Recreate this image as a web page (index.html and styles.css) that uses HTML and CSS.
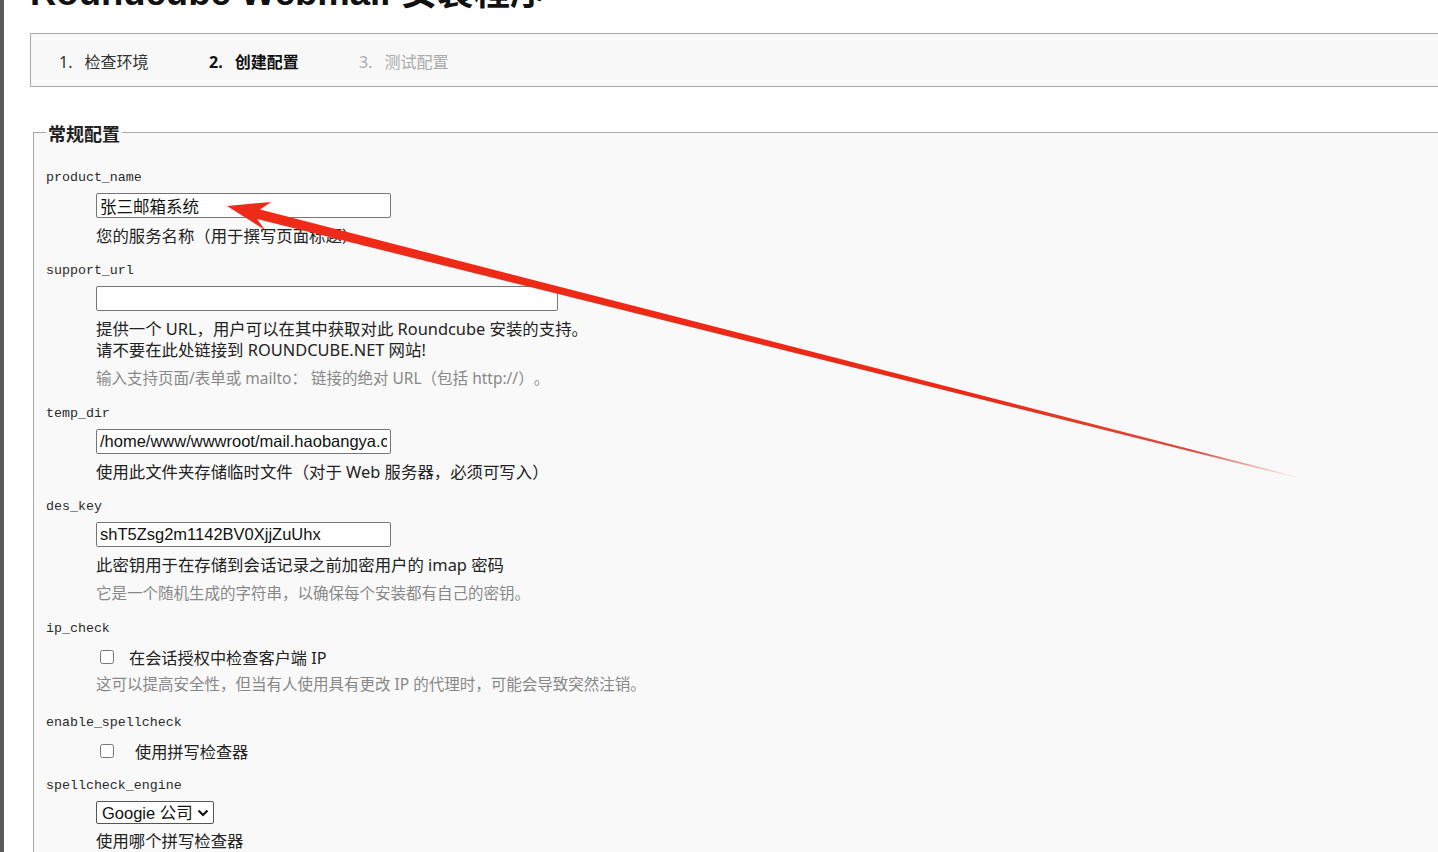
FILE: index.html
```html
<!DOCTYPE html>
<html lang="zh-CN">
<head>
<meta charset="utf-8">
<title>Roundcube Webmail 安装程序</title>
<link rel="stylesheet" href="styles.css">
</head>
<body>
<div class="frame">
  <div class="page">
    <h1 class="title">Roundcube Webmail 安装程序</h1>
    <ol class="progress">
      <li class="step done"><span class="num">1.</span>检查环境</li>
      <li class="step current"><span class="num">2.</span>创建配置</li>
      <li class="step todo"><span class="num">3.</span>测试配置</li>
    </ol>
    <form class="config">
      <fieldset class="group">
        <legend class="group-title">常规配置</legend>
        <dl class="fields">
          <dt class="key">product_name</dt>
          <dd class="val">
            <input class="text" type="text" value="张三邮箱系统">
            <div class="desc">您的服务名称（用于撰写页面标题）</div>
          </dd>

          <dt class="key">support_url</dt>
          <dd class="val">
            <input class="text wide" type="text" value="">
            <div class="desc">提供一个 URL，用户可以在其中获取对此 Roundcube 安装的支持。<br>请不要在此处链接到 ROUNDCUBE.NET 网站!</div>
            <p class="hint">输入支持页面/表单或 mailto： 链接的绝对 URL（包括 http://）。</p>
          </dd>

          <dt class="key">temp_dir</dt>
          <dd class="val">
            <input class="text" type="text" value="/home/www/wwwroot/mail.haobangya.com/temp/">
            <div class="desc">使用此文件夹存储临时文件（对于 Web 服务器，必须可写入）</div>
          </dd>

          <dt class="key">des_key</dt>
          <dd class="val">
            <input class="text" type="text" value="shT5Zsg2m1142BV0XjjZuUhx">
            <div class="desc">此密钥用于在存储到会话记录之前加密用户的 imap 密码</div>
            <p class="hint">它是一个随机生成的字符串，以确保每个安装都有自己的密钥。</p>
          </dd>

          <dt class="key">ip_check</dt>
          <dd class="val">
            <div class="check-row">
              <input class="check" type="checkbox" id="ip_check">
              <label class="check-label" for="ip_check">在会话授权中检查客户端 IP</label>
            </div>
            <p class="hint hint-check">这可以提高安全性，但当有人使用具有更改 IP 的代理时，可能会导致突然注销。</p>
          </dd>

          <dt class="key">enable_spellcheck</dt>
          <dd class="val val-check">
            <div class="check-row">
              <input class="check" type="checkbox" id="spell">
              <label class="check-label indent" for="spell">使用拼写检查器</label>
            </div>
          </dd>

          <dt class="key">spellcheck_engine</dt>
          <dd class="val">
            <div class="select-wrap">
              <select class="select"><option>Googie 公司</option></select>
              <svg class="chev" width="12" height="8" viewBox="0 0 12 8"><path d="M1.5 1.5 L6 6 L10.5 1.5" fill="none" stroke="#111" stroke-width="2.2"/></svg>
            </div>
            <div class="desc desc-tight">使用哪个拼写检查器</div>
          </dd>
        </dl>
      </fieldset>
    </form>
  </div>
</div>
<svg class="arrow" width="1438" height="852" viewBox="0 0 1438 852">
  <defs>
    <linearGradient id="fade" gradientUnits="userSpaceOnUse" x1="227" y1="206" x2="1300" y2="478">
      <stop offset="0" stop-color="#f02a18" stop-opacity="1"/>
      <stop offset="0.7" stop-color="#ea2a16" stop-opacity="1"/>
      <stop offset="0.9" stop-color="#d43020" stop-opacity="0.85"/>
      <stop offset="1" stop-color="#d43020" stop-opacity="0"/>
    </linearGradient>
  </defs>
  <polygon fill="url(#fade)" points="227,206 271,202 260,209.5 1300,477.4 1300,478.6 257,219 265,230 227,206"/>
</svg>
</body>
</html>
```
FILE: styles.css
```css
html, body {
  margin: 0;
  padding: 0;
  background: #fff;
  overflow: hidden;
  height: 852px;
}

body {
  font-family: "Noto Sans", "Noto Sans CJK SC", sans-serif;
  color: #222;
  position: relative;
  text-spacing-trim: space-all;
}

.frame {
  border-left: 4px solid #5a5a5a;
  height: 852px;
  display: flow-root;
}

.page {
  width: 1520px;
  padding-left: 26px;
}

.title {
  margin: -28px 0 0 0;
  font-family: "Liberation Sans", "Noto Sans CJK SC", sans-serif;
  font-size: 36.5px;
  line-height: 42px;
  font-weight: bold;
  color: #111;
  white-space: nowrap;
}

.progress {
  list-style: none;
  margin: 19px 0 31px 0;
  padding: 17px 0 13px 28px;
  border: 1px solid #aaa;
  background: #f8f8f8;
  box-shadow: inset 0 4px 0 #f8f8f8, inset 0 5px 0 #fdfdfd, inset 0 -4px 0 #f8f8f8, inset 0 -5px 0 #fdfdfd;
  display: flex;
}

.step {
  width: 150px;
  font-size: 16px;
  line-height: 22px;
  color: #333;
}

.step .num {
  margin-right: 12px;
}

.step.current {
  color: #111;
  font-weight: bold;
}

.step.todo {
  color: #aaa;
}

.config {
  margin: 0 0 0 3px;
}

.group {
  margin: 0;
  border: 1px solid #a8a8a8;
  background: #f9f9f9;
  padding: 10px 12px;
  min-height: 900px;
}

.group-title {
  padding: 4px 2px 0 2px;
  font-size: 18px;
  line-height: 24px;
  font-weight: bold;
  color: #222;
}

.fields {
  margin: 10px 0 0 0;
}

.key {
  font-family: "Liberation Mono", monospace;
  font-size: 13.3px;
  line-height: 20px;
  padding-top: 2px;
  color: #2a2a2a;
}

.val {
  margin: 5px 0 12px 50px;
}

.val-check {
  margin-bottom: 10px;
}

.text {
  display: block;
  box-sizing: border-box;
  width: 295px;
  height: 25px;
  margin: 0;
  padding: 1px 3px;
  border: 1px solid #767676;
  border-radius: 2px;
  background: #fff;
  font-family: "Liberation Sans", "Noto Sans CJK SC", sans-serif;
  font-size: 16.5px;
  color: #111;
}

.text.wide {
  width: 462px;
}

.desc {
  margin-top: 7px;
  padding-bottom: 1px;
  font-size: 16.4px;
  line-height: 21px;
  color: #222;
}

.desc-tight {
  margin-top: 6px;
}

.hint {
  margin: 7px 0 0 0;
  padding-bottom: 2px;
  font-size: 15.5px;
  line-height: 20px;
  color: #888;
}

.hint-check {
  margin-top: 4px;
  padding-bottom: 5px;
}

.check-row {
  display: flex;
  align-items: center;
  height: 26px;
  margin-top: 2px;
}

.check {
  width: 14px;
  height: 14px;
  margin: 0 15px 0 4px;
}

.check-label {
  font-size: 16.2px;
  color: #222;
}

.check-label.indent {
  padding-left: 6px;
}

.select-wrap {
  position: relative;
  display: inline-block;
}

.select {
  -webkit-appearance: none;
  appearance: none;
  box-sizing: border-box;
  width: 118px;
  height: 23px;
  margin: 0;
  padding: 0 20px 0 5px;
  border: 1px solid #555;
  border-radius: 2px;
  background: #fff;
  font-family: "Liberation Sans", "Noto Sans CJK SC", sans-serif;
  font-size: 16.5px;
  color: #111;
  display: block;
}

.chev {
  position: absolute;
  right: 5px;
  top: 8px;
  pointer-events: none;
}

.arrow {
  position: absolute;
  left: 0;
  top: 0;
  pointer-events: none;
}
```
